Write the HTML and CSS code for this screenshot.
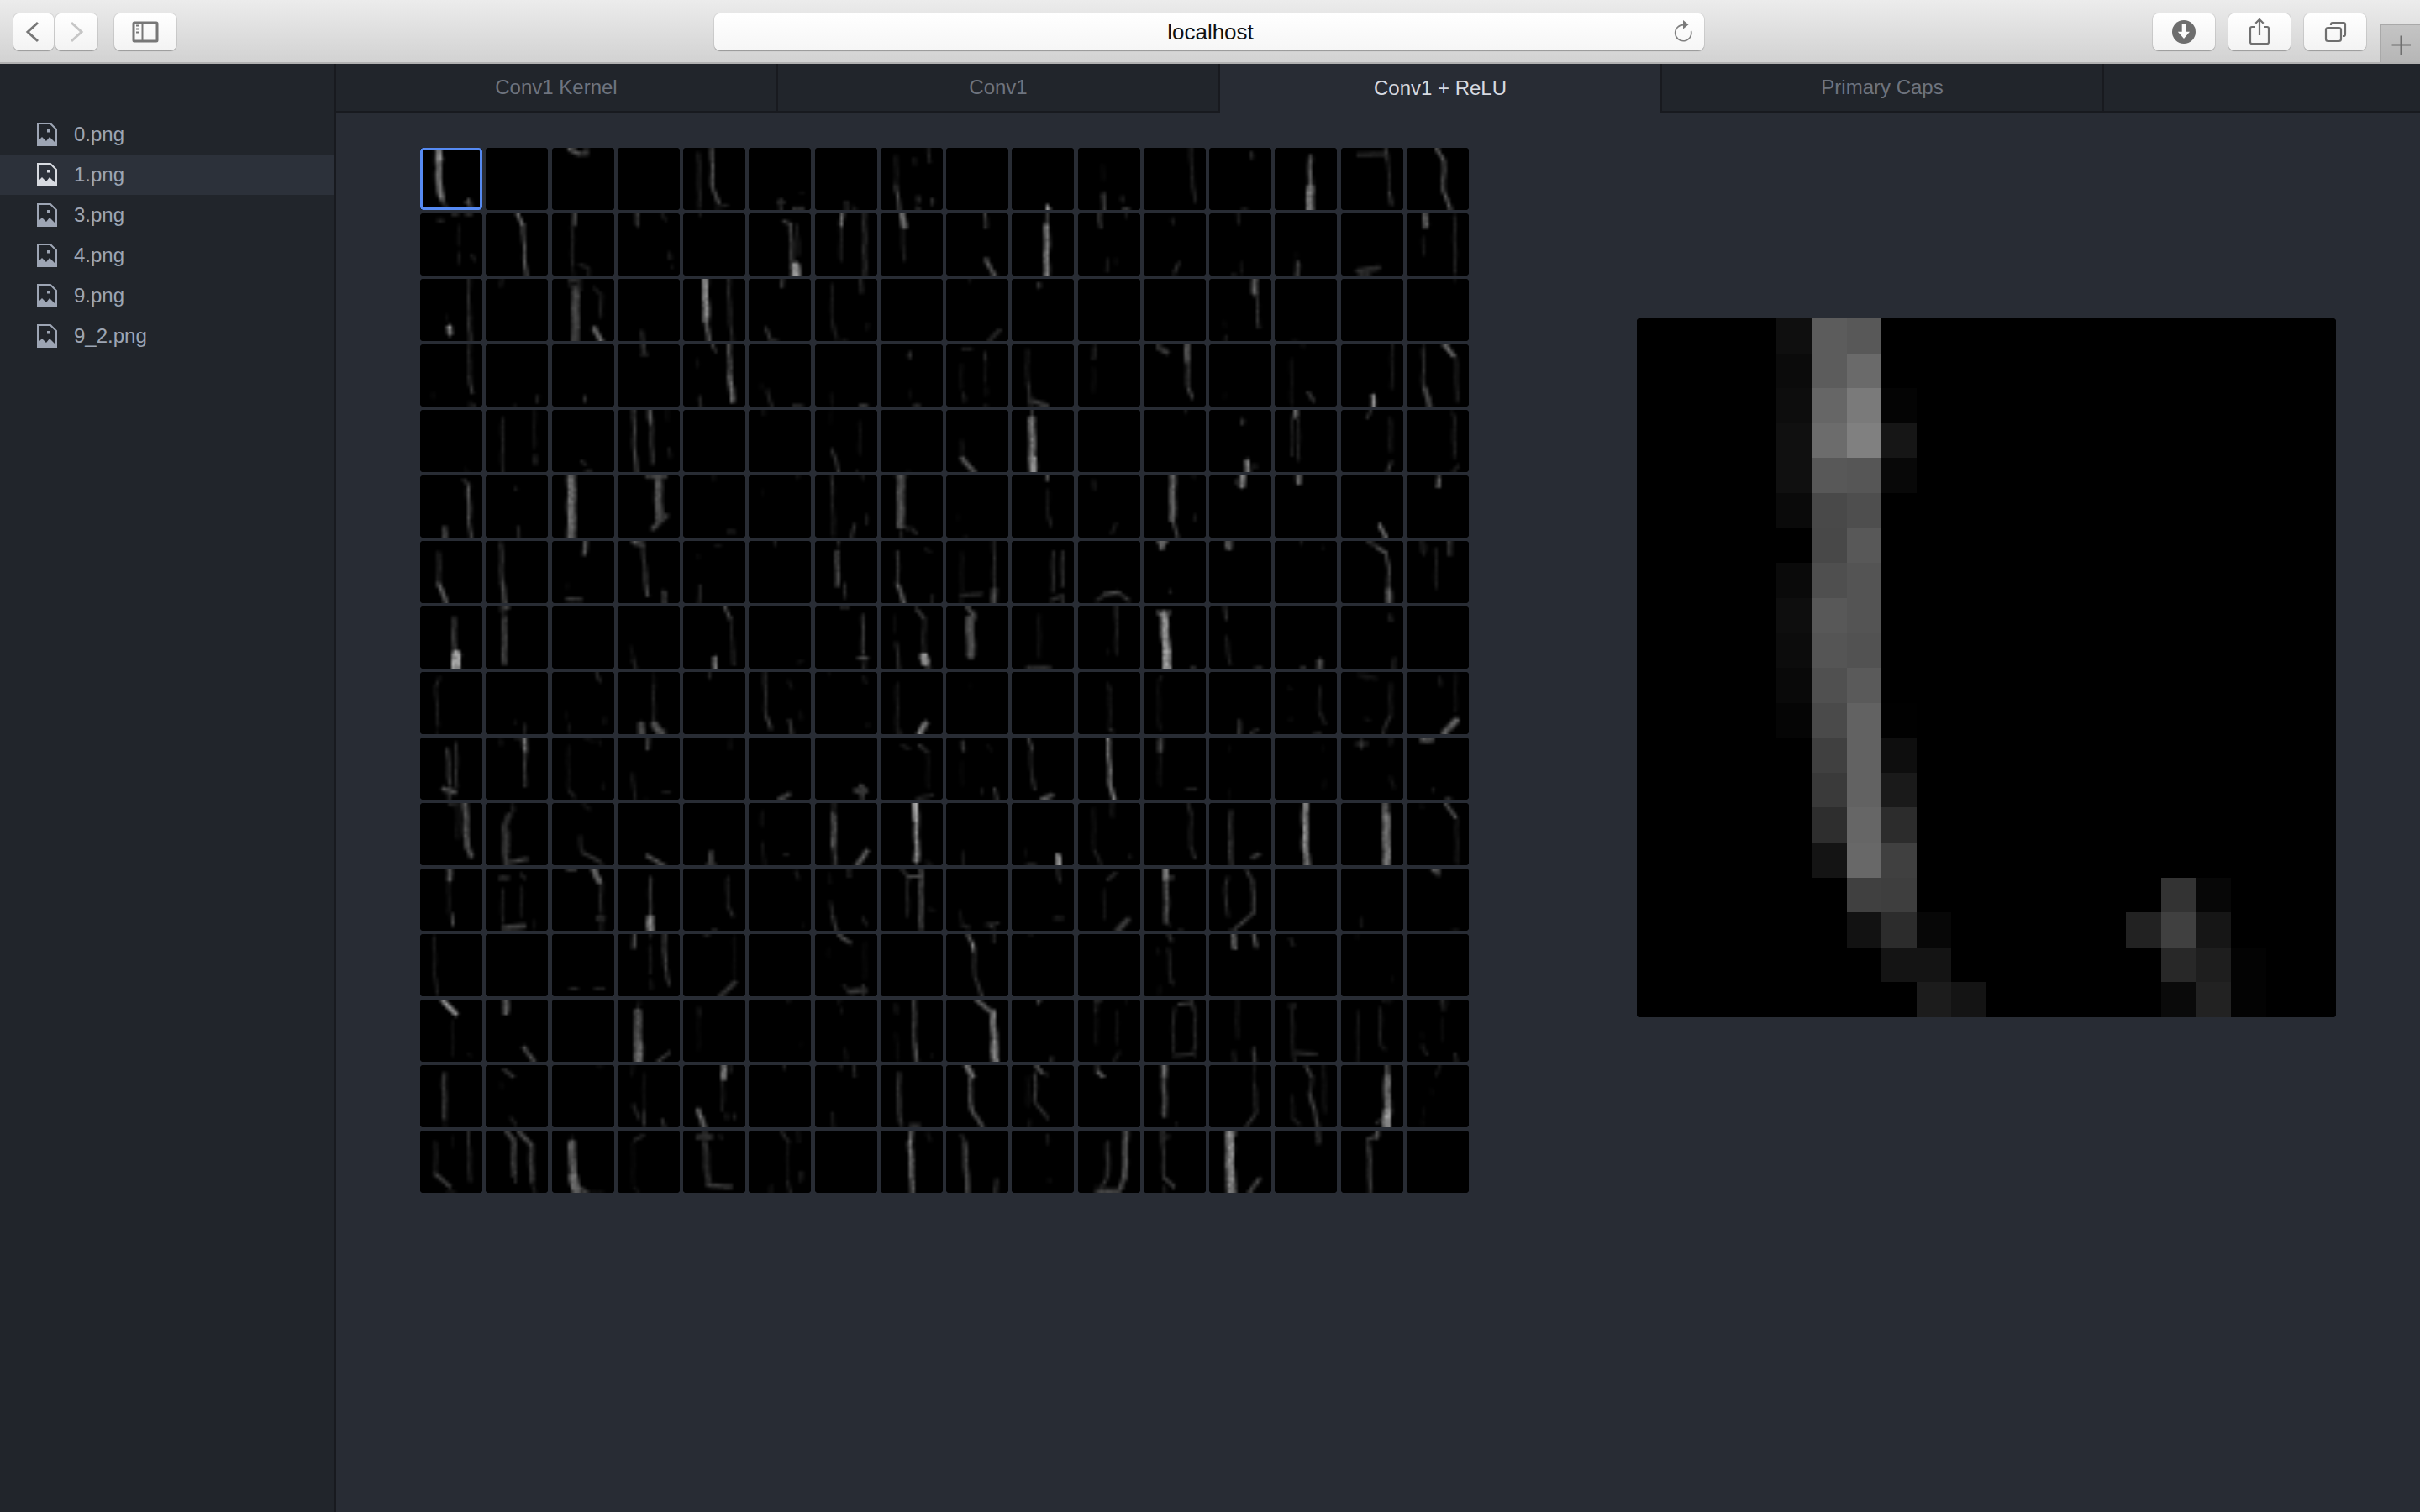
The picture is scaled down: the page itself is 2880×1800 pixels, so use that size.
FILE: index.html
```html
<!DOCTYPE html>
<html lang="en">
<head>
<meta charset="utf-8">
<title>localhost</title>
<link rel="stylesheet" href="styles.css">
</head>
<body>
<svg class="defs" width="0" height="0" aria-hidden="true">
  <symbol id="file-image" viewBox="0 0 24 28">
    <path d="M1 1H16L23 8V27H1Z" fill="none" stroke="currentColor" stroke-width="2"/>
    <path d="M1 27V22L6 17L11 22L15 17L23 25V27Z" fill="currentColor"/>
    <rect x="12" y="8" width="3.5" height="3.5" fill="currentColor"/>
  </symbol>
</svg>

<header class="toolbar">
  <div class="nav-group">
    <button class="tool tool-back" type="button" aria-label="Back">
      <svg width="48" height="44" viewBox="0 0 48 44"><path class="glyph" d="M29 11L17 22L29 33"/></svg>
    </button>
    <button class="tool tool-forward" type="button" aria-label="Forward">
      <svg width="50" height="44" viewBox="0 0 50 44"><path class="glyph glyph-off" d="M19 11L31 22L19 33"/></svg>
    </button>
    <button class="tool tool-wide tool-sidebar" type="button" aria-label="Sidebar">
      <svg width="74" height="44" viewBox="0 0 74 44">
        <rect class="glyph" x="23" y="11" width="28" height="22" rx="1"/>
        <path class="glyph glyph-thin" d="M33.5 11V33M26 14.5H30M26 18.5H30M26 22.5H30"/>
      </svg>
    </button>
  </div>
  <div class="address">
    <span class="address-text">localhost</span>
    <svg class="reload" width="26" height="32" viewBox="0 0 26 32">
      <path d="M13.5 8.6A9.6 9.6 0 1 0 22.6 16" fill="none" stroke="#808080" stroke-width="1.6"/>
      <path d="M13 3L19.5 8.2L13 13.5Z" fill="#7a7a7a"/>
    </svg>
  </div>
  <div class="action-group">
    <button class="tool tool-wide" type="button" aria-label="Downloads">
      <svg width="74" height="44" viewBox="0 0 74 44">
        <circle cx="37" cy="22" r="14" fill="#6e6e6e"/>
        <path d="M34.7 12.7H39.3V21.7H44L37 30L29.8 21.7H34.7Z" fill="#fbfbfb"/>
      </svg>
    </button>
    <button class="tool tool-wide" type="button" aria-label="Share">
      <svg width="74" height="44" viewBox="0 0 74 44">
        <path class="glyph glyph-mid" d="M32 16H28a2 2 0 0 0-2 2V34a2 2 0 0 0 2 2H46a2 2 0 0 0 2-2V18a2 2 0 0 0-2-2H42"/>
        <path class="glyph glyph-mid" d="M37 7V26M32.3 11.7L37 7L41.7 11.7"/>
      </svg>
    </button>
    <button class="tool tool-wide" type="button" aria-label="Tabs">
      <svg width="74" height="44" viewBox="0 0 74 44">
        <rect class="glyph glyph-mid" x="26" y="17" width="18" height="16" rx="2.5"/>
        <path class="glyph glyph-mid" d="M32 14V13a2 2 0 0 1 2-2H47a2 2 0 0 1 2 2V25a2 2 0 0 1-2 2H46"/>
      </svg>
    </button>
    <button class="new-tab" type="button" aria-label="New tab">
      <svg width="46" height="46" viewBox="0 0 46 46"><path d="M12.5 23.5H35M23.5 12.5V35" fill="none" stroke="#6f6f6f" stroke-width="2"/></svg>
    </button>
  </div>
</header>

<div class="workspace">
  <aside class="sidebar">
    <ul class="file-list">
      <li class="file"><svg class="file-icon" width="24" height="28"><use href="#file-image"/></svg><span>0.png</span></li>
      <li class="file file-active"><svg class="file-icon" width="24" height="28"><use href="#file-image"/></svg><span>1.png</span></li>
      <li class="file"><svg class="file-icon" width="24" height="28"><use href="#file-image"/></svg><span>3.png</span></li>
      <li class="file"><svg class="file-icon" width="24" height="28"><use href="#file-image"/></svg><span>4.png</span></li>
      <li class="file"><svg class="file-icon" width="24" height="28"><use href="#file-image"/></svg><span>9.png</span></li>
      <li class="file"><svg class="file-icon" width="24" height="28"><use href="#file-image"/></svg><span>9_2.png</span></li>
    </ul>
  </aside>
  <main class="main">
    <nav class="tabs">
      <div class="tab">Conv1 Kernel</div>
      <div class="tab">Conv1</div>
      <div class="tab tab-active">Conv1 + ReLU</div>
      <div class="tab">Primary Caps</div>
    </nav>
    <section class="panel">
      <div class="grid" id="grid"></div>
      <canvas class="preview" id="preview" width="20" height="20"></canvas>
    </section>
  </main>
</div>
<script src="app.js"></script>
</body>
</html>
```

FILE: styles.css
```css
* { box-sizing: border-box; }
html, body { margin: 0; height: 100%; overflow: hidden; }
body {
  display: flex;
  flex-direction: column;
  height: 1800px;
  background: #282c34;
  font-family: "Liberation Sans", Arial, sans-serif;
}
.defs { position: absolute; }

.toolbar {
  display: grid;
  grid-template-columns: 834px 1178px 1fr;
  height: 76px;
  flex: none;
  padding-left: 16px;
  padding-top: 16px;
  background: linear-gradient(#ececec, #d2d2d2);
  border-bottom: 2px solid #b1b1b1;
}
.nav-group { display: flex; align-items: flex-start; }
.action-group { display: flex; align-items: flex-start; justify-content: flex-end; gap: 16px; }

.tool {
  display: block;
  width: 48px;
  height: 44px;
  padding: 0;
  border: 0;
  border-radius: 7px;
  background: linear-gradient(#ffffff, #f3f3f3);
  box-shadow: 0 0 0 1px rgba(0, 0, 0, .07), 0 1px 1px rgba(0, 0, 0, .22);
}
.tool svg { display: block; }
.tool-forward { width: 50px; margin-left: 2px; }
.tool-wide { width: 74px; }
.tool-sidebar { margin-left: 20px; }

.glyph { fill: none; stroke: #777777; stroke-width: 3; }
.glyph-off { stroke: #c6c6c6; }
.glyph-thin { stroke-width: 2; }
.glyph-mid { stroke: #6f6f6f; stroke-width: 2.2; }

.address {
  position: relative;
  display: flex;
  align-items: center;
  justify-content: center;
  height: 44px;
  padding-left: 3px;
  border-radius: 7px;
  background: linear-gradient(#ffffff, #f6f6f6);
  box-shadow: 0 0 0 1px rgba(0, 0, 0, .06), 0 1px 1px rgba(0, 0, 0, .25);
}
.address-text { font-size: 26px; color: #111111; }
.reload { position: absolute; right: 12px; top: 5px; }

.new-tab {
  width: 48px;
  height: 46px;
  margin-top: 12px;
  padding: 0;
  border: 0;
  border-left: 2px solid #a9a9a9;
  border-top: 2px solid #a9a9a9;
  background: linear-gradient(#c4c4c4, #b6b6b6);
}
.new-tab svg { display: block; }

.workspace { display: flex; flex: 1; min-height: 0; }

.sidebar {
  width: 400px;
  flex: none;
  padding-top: 60px;
  background: #21252b;
  border-right: 2px solid #181a1f;
}
.file-list { margin: 0; padding: 0; list-style: none; }
.file {
  display: flex;
  align-items: center;
  gap: 20px;
  height: 48px;
  padding-left: 44px;
  font-size: 24px;
  color: #9da5b4;
}
.file-icon { flex: none; color: #9da5b4; }
.file-active { background: #2c313a; }
.file-active .file-icon { color: #d7dae0; }

.main { display: flex; flex-direction: column; flex: 1; min-width: 0; }

.tabs {
  display: flex;
  height: 58px;
  flex: none;
  background: #21252b;
  border-bottom: 2px solid #181a1f;
}
.tab {
  display: flex;
  align-items: center;
  justify-content: center;
  width: 526px;
  height: 56px;
  font-size: 24px;
  color: #6e747f;
  border-right: 2px solid #181a1f;
}
.tab-active {
  height: 58px;
  color: #d7dae0;
  background: #282c34;
}

.panel {
  display: flex;
  flex: 1;
  align-items: flex-start;
  justify-content: space-between;
  padding: 42px 100px 0;
}
.grid {
  display: grid;
  grid-template-columns: repeat(16, 74px);
  grid-auto-rows: 74px;
  column-gap: 4.27px;
  row-gap: 4px;
  width: 1248px;
}
.cell {
  position: relative;
  overflow: hidden;
  border-radius: 4px;
  background: #000000;
}
.cell-selected::after {
  content: "";
  position: absolute;
  inset: 0;
  border: 3.5px solid #568af2;
  border-radius: 4px;
}
.cell canvas { display: block; width: 100%; height: 100%; filter: blur(0.6px); }
.preview {
  display: block;
  flex: none;
  width: 832px;
  height: 832px;
  margin-top: 203px;
  border-radius: 4px;
  image-rendering: pixelated;
  background: #000000;
}
```

FILE: app.js
```js
// First feature map (20x20 activations), also shown enlarged in the preview: "column:hex" per row.
var FIRST = [
  "4:0f 5:5c 6:58",
  "4:0b 5:5c 6:6a",
  "4:0d 5:66 6:7a 7:04",
  "4:10 5:6c 6:80 7:16",
  "4:10 5:58 6:56 7:08",
  "4:0a 5:49 6:4e",
  "5:48 6:58",
  "4:0a 5:4f 6:54",
  "4:0e 5:58 6:54",
  "4:0c 5:55 6:52",
  "4:09 5:50 6:5a",
  "4:05 5:4a 6:62 7:01",
  "5:40 6:62 7:0e",
  "5:3a 6:62 7:1a",
  "5:2e 6:66 7:2c",
  "5:14 6:68 7:40",
  "6:40 7:3e 15:33 16:07",
  "6:12 7:2c 8:07 14:22 15:40 16:16",
  "7:14 8:14 15:28 16:1e 17:03",
  "8:1c 9:14 15:0a 16:22 17:03"
];

// Every other map: strokes "x1,y1,x2,y2,brightness[,width]" in the 20x20 activation space.
var MAPS = [
/* row 1 */
"@first",
"",
"5.5,0.5,8,1.5,130,1.2 8,2,11,1.8,100 11,0,11,2,70",
"",
"9.2,0,9.4,13,120 9.4,13,11.3,17.5,110 5,2,5.2,19,45 11,19,14,18.5,40",
"10.3,16.5,10.3,19.5,60 9.5,17.5,11.5,17.5,50 14.5,19.4,17.5,19.4,60 17,14.5,17,14.5,25",
"10,17.5,10,20,60 12,19,13,20,30",
"5,3,5,12,35 5,12,6,20,90 15.3,0.5,15.8,4.5,50 12,16,12,17,80 11.8,19.2,12.2,19.8,70 16.5,16.5,16.5,18,70 11,3.5,11,5,35",
"",
"11.7,19.3,11.7,19.6,255 11.5,18.5,11.5,18.5,120",
"8.2,15,8.2,20,95 14.2,16,14.2,17,50 14.5,19.5,16,19.5,60 8,6,8,10,15",
"15.2,0,15.5,9,45 15.5,9,16.5,17,50",
"13.7,1.8,13.7,3,70 11,19.5,12,19.5,30",
"11.4,3,11.4,12,110,1.4 11.4,13,11.2,20,150,2.6",
"5.5,2.2,14,2,70 14.2,0,15,4,80 15.2,4,15.6,14,40 15.6,14,16,18,70",
"9.5,0,12,4,130 12,4,11.8,14,120 11.8,14,14.2,19.8,120",
/* row 2 */
"6,2.2,7,2.2,60 10.8,0.4,12,0.4,50 15,0.4,16.5,0.4,50 12.4,4,12.4,10,22 12.4,13,12.4,16,30 16.5,13.5,17.5,15,35",
"10,0,12,4,160 12,4,12.5,14,100 12.5,14,13,20,110",
"7.2,0,7.2,3.5,90,1.4 6.5,4,6.5,17,40 9,16.5,11.5,17.5,45 11.7,18,11.7,20,40 6.5,18,7,20,25",
"6.3,0,6.3,3.8,90 14.5,0.5,15.5,2,40 16.7,13,16.7,14.5,45 17.5,17,17.5,17.5,25",
"5.5,0.4,5.5,0.8,25",
"11.3,2.5,13.5,3.5,80 13.5,3.5,14,17,80,1.2 15.5,4,16,13,40 15,17,15,20,190,3",
"8.7,0,8.5,4,130,1.2 8.3,5,8.3,15,40 15.9,0,16,20,70",
"7,0,7.5,4,150,2 7,5,7.5,15,40",
"12.5,0,12.7,4.3,80 13,15,15.5,20,110,1.4",
"11.3,0,11.3,4,70 11.3,4,11.2,20,150,1.8",
"6.9,0.3,7.2,4.2,80 9.3,15,9.3,18.5,35 12,15,12,16,20 15.5,0,15.5,1,30",
"9.3,2,9.3,3,45 11.3,16,10,19,60",
"9.3,0.3,9.3,3,45 10.4,16,10.4,19,25 7.5,19.5,8,19.5,25",
"7.4,16,7.2,20,80,1.4 7,13,7,14,15",
"5.5,18.5,12,17.5,60,1.6 6,19.5,9,19.5,50",
"6,1,6,4,110,2 5.4,8,5.4,13,30 15.4,1,15.6,19,45",
/* row 3 */
"15.6,0,15.6,12,50 15.8,12,16,20,70 9.5,15.5,9.5,17.5,190,1.6 8.5,12,8.5,13,15",
"5,0.3,5,2,35",
"6,0.5,9,1,70 6,2,9,3,60 7.5,4,7.5,19.5,90,2.6 13.5,3,15.5,5,40 15.7,5,15.7,12,40 13.5,16,16,20,130,1.6",
"7.9,17,8,20,60",
"7,0,7.4,13,170,2 7.4,13,8.2,20,110,1.4 14.6,0,15,12,55 15,12,15.7,20,45",
"10.8,0,10.8,2.5,80 5.5,16,7,19.5,70 7,19.5,9,19.5,40",
"14.8,0,14.8,4,60 5.4,2,5.4,14,30 5.4,14,7,19,40 16.8,14.5,16.8,16,25 9,19.5,10,19.5,20",
"",
"7.5,0.2,7.5,0.8,25 17,16.5,14,19.5,50,1.4",
"8.9,1.7,8.9,2.7,90",
"",
"",
"14.5,0,14.7,4.5,130,1.8 15.3,5,15.8,15.5,60 5,14,5,15,15 5.3,18.5,5.3,19.5,35",
"6,19.5,7,19.5,12",
"",
"15.3,0.3,15.3,0.8,20",
/* row 4 */
"15.8,0,15.8,10,50 15.8,10,16.6,15.5,70 16,19,17.5,19.5,35 4,16,4,17,15",
"16.7,16.5,16.7,18.5,40 9.4,19.4,9.4,19.7,25",
"10.6,17,10.6,18,70",
"8,0,8.4,3,90 9.5,3.2,8,3.2,50",
"9.5,0.5,10.5,2,80 14.8,0,15,10,110,1.2 15,10,15.8,18,130,1.6 4.5,5,4.5,7,20 5.2,17,5.8,20,50",
"6,15,7.5,20,45 14.5,19.5,17,19.5,40 4,13,4,14,15",
"14.5,19.5,16.5,19.5,60 5.3,16,5.3,19,20",
"9.4,3,9.4,4,90 11,19.4,12.2,19.4,60 9.4,15,9.4,17,15",
"5.5,1.4,8,1.4,45 12.5,3,12.5,5,55 12.6,5,12.6,12,22 4.8,6.5,4.8,14,22 5.5,16,6,18,45 12.8,14,12.8,16,22 12.5,19.5,13,19.5,25",
"5,2,5,12,35 5,12,6,17.5,60 6,18,11,19.5,80,1.4 6,19.5,6,20,60",
"5.1,1,5.1,4.5,55 5,8,5,15,18",
"4.8,1,7.5,2.5,70,1.8 14,0,14,5,130,1.6 14,5,14.3,14,80 14.3,14,15.5,17,90",
"5,16,5,17,12",
"5.4,5,5.4,19,22 11,15.5,12.5,18,80 9,0.4,9,0.8,20",
"10.3,16.5,10.4,20,190,1.3 16.4,0.5,16.4,14,30",
"5.4,1,5.4,14,60 5.6,14,7.6,20,100,1.6 12.2,0,15,3.5,140,1.4 15.8,4,16.2,18,45",
/* row 5 */
"14.5,19,15,19.5,15",
"5.4,3,5.4,19.5,40 15.6,0.5,15.6,12,25 16,15,16,17,60",
"9.5,16.5,10.5,17.5,50 11,19.4,12.5,19.4,35",
"5.2,0.5,5.4,14,80 5.4,14,6.3,20,100 10.4,0,10.6,4,120,1.4 10.7,4,11.2,17,70 16.5,12.5,16.8,15,30 16,0.5,16,3,20",
"",
"4.7,0.5,4.7,1.5,25",
"5.5,13,7.5,19.5,70 14.4,4,14.4,14,22 5,1,5,4,10 13.5,19.5,13.5,20,30",
"9,19.5,9,20,15",
"5,10,5,15,30 5.2,15.5,9,20,100,1.6",
"6.4,0,6.4,3,60 6.4,3,6.8,20,150,2.2 6.8,15.5,6.8,19,190,2.6",
"",
"13.7,0.2,13.7,0.8,30",
"10.7,3.2,10.7,4.2,80 12.3,16.5,12.3,19.5,170,1.6 14,18,15,18,50",
"6.7,0.2,6.7,2,130,1.6 5.6,2,5.6,14.5,40 7.6,2,7.6,16,40",
"9.5,0.5,8.5,2.5,60 15.9,3,15.9,13,35 16,17,15,20,70",
"14.5,1,15.3,2,30 15.3,2,15.3,15,45 16.5,18,15,20,45",
/* row 6 */
"14,1.5,15.5,3,70 15.5,3,15.7,14,100,1.2 15.7,14,16.3,20,90 7.8,17,7.8,19.5,80,1.8",
"9.8,4,9.8,4.5,35 10.3,16.5,10.6,19.5,50",
"6.2,0,6.2,20,130,2.8",
"9.5,0.5,15.5,0.5,70,1.2 13,0,13.3,14,100,2.6 15.5,13,11.5,17,80,1.6",
"9.7,0.6,9.7,1.2,25 14.5,18,16.5,18,45",
"15.5,0.3,15.9,0.8,25 4.5,5,4.5,6,10",
"5.5,0.5,5.5,6,50 5.5,6,6,19,35 12.7,16,11.7,20,70 16.5,13,16.5,15.5,40 15.4,0.5,15.4,1,35",
"5.5,0.5,7.5,0.5,80,1.4 6.4,0,6.4,16,100,2.6 7,16,8.5,17,60 10,17,11.3,18.5,60 6.5,18,6.5,20,40",
"4,13,4,14,10 6,19.5,6.5,19.5,15",
"11.5,0.3,11.5,1.3,130 11.5,5,11.7,14,30 12.3,14,12.3,16,40",
"5,2,5,4,45 12.2,15.5,11,18.5,35",
"9.3,0.6,9.3,14,130,2 9.5,14,10.8,20,90 16.5,13,16.5,14.5,35 16,0.5,16,0.8,25",
"10.7,0.5,10.7,3.2,160,2 9,2,11,2,90",
"7.8,0.3,7.8,2.2,130,1.8",
"12.5,16,14.5,20,150,1.2",
"10.2,1,10.2,3.5,150,1.2",
/* row 7 */
"6,4,6,14,60 6,14,8.5,20,120,1.4",
"5,1,5.2,13,70 5.2,13,6.3,20,90,1.4",
"10.7,0,10.3,4,110,1.4 5,18.7,9,18.7,60,1.4 5,14,5,15,15",
"5,0.6,8,1.2,110,1.2 8,1.2,8.8,10,70 8.8,10,9.5,17.5,90 14.9,16.5,14.9,19.5,70,1.6",
"5.3,14.5,5.3,20,50 10.5,1.5,12,1.5,25 4.8,4.5,4.8,5.5,15",
"8.5,0.2,8.5,1,40",
"7.5,0.3,7.5,1,60 7,3.5,7.3,14,90,1.5 9.6,14,9.6,18,55",
"5.5,3.5,5.5,14,60 5.5,14,7.5,20,110,1.4 14.5,2.5,16,3.5,30 16.5,17.5,16.5,20,35",
"15.4,0.5,15.4,15,50 15.4,15.5,15.4,19.5,90,1.8 5,4,5,17,22 5,17.5,11,17,55,1.2 5,18,5,20,30",
"13.3,3.5,13.3,16,55 16.3,3.5,16.3,14.5,60 13,19,16.5,17.5,55,1.2 16.3,18,16.3,20,55",
"6,19,9,17,60 9,17,13,16.5,90,1.3 13,16.5,16,19,70",
"5,0.2,7,0.2,130,1.4 5.9,0.2,5.9,2,120,2 8.5,16,8.5,16.5,40",
"6.3,0.2,6.3,1.8,110,2.4",
"8.6,0.3,8.6,0.8,30 15.5,2,15.5,2.5,20",
"8.7,0.3,11,1.5,70 11.5,2,14,3.5,120 14.5,3.5,15.3,9,90 15.3,9,15.3,16,80 15.3,16,15.3,20,120,2",
"5,0.5,5.4,4,50 6.5,2,6.2,3,25 9.4,2.5,9.4,15,35 13.8,0,13.8,4,70,1.4",
/* row 8 */
"10.9,4,10.9,15,80,1.3 11.6,15.5,11.6,20,200,3.2",
"5,1,7,0.5,90 5.8,1.5,5.8,3.5,50 6,4,6,18,85,1.6",
"",
"4.2,13,5,17,20 5,17,6,20,50",
"13.5,0.3,15,4,100 15.5,4.5,15.8,14,35 16,14,16.3,18.5,50 10.3,16.5,10.3,19.5,170,1.4",
"16,18,17,17.5,25",
"15.4,3,15.4,15,70 14,16.5,16.5,16.5,90,1.2 15.8,17,15.8,20,50 8.5,0.4,10.5,0.4,40",
"11.8,1,14,4,90 14,4,13.8,15,50 13.8,16,14.5,18,200,2.6 15.5,18,15.8,20,70 4.5,3,4.5,8,15 5,12,6,20,55",
"7,0.5,9,3,90,1.4 8.8,2,9,4,90 7.5,4,8,15.5,100,2.8",
"8.8,3,8.8,16,25 5,19.5,12,19.5,50,1.2",
"12.2,0.3,12.4,4,60 12.3,4,12.3,15,40 9.5,14,9.5,15,15",
"4.8,2,8,2,100,1.5 6.5,2.5,7.3,14,180,2.6 7.3,14,7.5,20,200,2.8 15.5,19.5,16.5,19.5,45",
"5,0.5,5.4,4,60 5.4,10,6.7,18.5,40 15,19.5,16.5,19.5,45",
"14.4,17.5,14.4,20,110,1.8 8.5,19.5,9.5,19.5,45",
"15.9,3,15.9,4.5,60 17,17,17,20,50",
"",
/* row 9 */
"6,2,5,5,40 5,5,5.8,17,35 5.3,19,5.3,20,20",
"9.3,16,9.3,16.5,25 12.5,17,12.5,19.5,40",
"14.5,0.3,15.3,2.8,60 5.5,17,5.5,19,25 16.8,15,16.8,16.5,25 4.5,13,4.5,15,12",
"11.6,1,11.6,4,22 11.6,4.5,11.6,16,40 7.7,17,7.7,19.5,90,2.4 12,17,13.8,19.5,100,2.6 15,19,15,20,60",
"8.3,0.2,8.3,1.8,45",
"5.2,0.5,5.5,14,55 5.5,14,7,18,80 13,15.5,14,20,70 13,3,13.8,5,25 16.8,13,16.8,15,20",
"15.8,1.5,16.2,3.5,30 17,16.5,17,17.5,20 4.5,0.4,4.5,0.8,15",
"5.3,4,5.3,19.5,35 14.5,16.5,12.5,19.5,160,1.8 6.5,19,6.5,20,25",
"8,4,8,5,8",
"",
"9.5,4,10.2,6,40 10.2,6,10.2,18,30 10.2,18,11,19,50",
"5.5,1.5,4.8,3,30 4.8,3,4.8,17,18 5.2,17,5.2,18,30",
"9.6,16,9.6,19.5,70,1.3 13.5,19.5,15.5,18.5,50",
"14.4,5,14.4,13,30 14.4,13,16,16.5,45 4.5,5,5,5.5,20 13,19.5,14.5,19.5,35 5,15,5,15.5,20",
"15.9,4,15.9,14,35 15.9,14,14,18,60 14,18,13.5,20,50 6,1,11,2,30 8,1,8,2,30 8,15,9,15.5,25",
"15.7,1,15.7,12.5,25 10.5,2,11,4,40 16,15.5,12,19.5,120,2",
/* row 10 */
"8.8,4,9.5,15,70,1.2 11.6,2,11.6,16,55 7.5,16.5,11,17.5,100,1.6 9,17.5,9.5,20,70",
"12.6,0,12.6,4,140,1.5 12.6,4,12.6,15.5,70 5,1,5,2,30 10,0.4,10.5,0.4,30",
"5.2,3,5.2,16,20 5.5,17,7,19,45 11,0.5,13,1,20 15,1,15.5,2,20 16.5,15,16.5,16.5,20",
"9.7,0,9.7,3.5,80,1.2 4.8,12,5.5,19.5,35 14.7,17.5,16.5,17.5,35 9,19.5,9,20,10",
"15.2,1,15.2,3.5,22",
"10,19.8,13,18.2,90,1.3",
"13.2,17,16.5,17,100,1.4 15,15.5,15,19,90,1.4",
"7,2.5,9,3.5,40 12.5,2.5,15,4.5,65 15.2,5,15.2,16,20 12,19.5,16.5,18.5,50",
"5.5,1.5,5.5,4,70,1.3 13.5,2.5,14.5,4,20 15.5,16.5,16.5,20,70 11.5,16.5,11.5,18,30 5,8,5,15,12",
"5.5,0.3,6.5,4,80 6,4,6.5,13,45 6.5,13,7.5,16.5,60 9.5,20,13,18.5,110,1.4",
"9.5,0,10,8,150,1.3 10,8,10.3,15,140,1.3 10.3,15,11.5,20,150,1.3",
"5.4,1,5.4,4,90,1.8 5.2,5,5.2,15,25 14,16.5,16.5,16.5,45",
"6.5,3,6.5,4,12 6.5,17,6.5,19,12",
"15.5,3,15.5,4,10 16,14,16,16,15",
"5,2,8,2,70 6.5,1,6.5,3,70 15.9,0.5,15.9,2,40 16,13,17,16,30",
"5,0.8,8,0.8,110,1.6 8.5,16.5,8.5,17,30 13,19.5,14,19.5,50",
/* row 11 */
"9.5,0.5,13.5,1,40 12,1,12,11,30 14.5,0.5,15,14,100,2 15,14,16.5,17,100,1.6",
"8.7,1,8.7,2.5,50 7.5,4,6,8,60,2 6,8,6.5,20,70,1.8 7.5,9,7.5,16,40 7.5,19,13,18,80,1.2",
"10,0.5,12,2,25 9,11,9.5,16,45 10,16,15.5,19,70 15.5,19,16,20,50",
"9.5,17,15,20,100,1.2",
"9,16,9,20,100,1.4 8,19.5,10,19.5,70",
"4.3,3,4.3,7,25 4.5,13,5,20,25 11.8,16.5,12.5,16.5,40",
"6,0.5,6,4,60 6,4,6,14,110,1.6 6,14,6.5,20,70,1.4 16.5,15.5,13.5,20,120,1.6",
"11.2,0,11.2,5,210,2 11.4,5,11.6,15,170,1.5 11.6,15,11.6,18.5,170,1.8 15,19,16,19.5,35",
"5.5,16,5.5,20,30",
"14.8,17,15,19.5,200,1.8 5,19.5,7.5,19.5,35 4.5,15,4.5,17,15",
"5,2,5,15,25 5,15,7.3,19.5,40 11,0,11,4,35 16.6,17,16.6,17.5,35",
"14.5,0.5,15.3,4,50 15.3,4,15,14,40 15,14,16.5,17.5,55",
"6.8,3,6.8,12,55,1.3 6.8,12,7,20,70,1.3 14,17.5,16,16.5,70,1.4",
"9.8,0,9.8,14,170,2 9.8,14,10.4,20,140,2.2",
"14.3,1,14.3,4,110,2.4 14.5,4,14.7,20,150,2.6",
"12.5,0,15.5,4.5,120 16,4.5,16.2,19,35 5,1,5,1.5,20",
/* row 12 */
"9.4,0.3,9.4,3.5,120,1.6 9.2,4,9.2,14,30 10.5,15,10.5,18,90",
"5,3,7,3,60,1.4 11.5,2,12.5,3,50 5.4,7,5.4,17,35 11.5,6,11.5,15,30 6,19,12,18.5,80,1.8 15.5,17,15.5,19,20",
"13.5,0,15,4,130,2 15.7,4.5,15.7,14,50 14.5,16,16.5,16,70,1.3 16,17,16,20,40 5,0.5,7.5,0.5,60",
"10.5,3,10.5,16,70 10.5,16,10.5,20,170,2.4",
"14.3,3,14.3,12,40 14.3,12,16,15,50 9.5,19.5,10.5,19.5,35",
"15.2,1,16,3,40 17.5,18,17.5,18.7,15",
"5,11,5.5,15,45 5.5,15,7,20,70 11,0.3,11,2.5,55 15.5,16,16.5,18,40 4.7,2,4.7,4.5,20",
"7,0.5,9,3,70 8.6,3,8.6,15,45 9,2.5,13,2.5,90 13,0,13,19,90,1.4 15.5,13,17,13.5,25",
"5,18,7,19,50 15,19,14,18,60 13,18,16.5,17.5,50 4.5,14,5,18,25",
"14.9,0.3,15.5,4,60 14,16,16,16,55",
"9.5,3.5,12,1.5,55 8.4,7,8.4,16,25 12.5,20,16,16.5,75,1.8",
"7,0.5,7,3,170,1.8 8,3,9,3,100 7.3,3,7.3,17,100,1.6 7,17,8,18,45 11.5,19.5,12,19.5,30",
"12,0.5,14,4,70 14,4,14.5,14,70,1.2 14.5,14,8,19.5,80 6,3,5,7,50 5,7,6,15,50 7,19.5,7,20,40",
"",
"6.5,16,6.5,18.5,25",
"8.5,0.5,10,1,110,1.5 10,1,10,2,80 15,19.5,16,19.5,20",
/* row 13 */
"4.5,1,4.7,14,35 4.8,14,5.5,19,40",
"",
"6,17.5,8,17.5,45 14,17.5,16.5,17.5,45",
"5.3,0.3,5.3,4,100,1.2 10.5,0,10.5,1,40 10.5,4,10.5,12.5,30 10.8,15,10.8,17.5,30 15,0,15.3,10,70,1.3 15.3,10,16.5,16,70",
"16.4,1,16.4,14,15 7,0.5,8,0.5,35 16.5,15.5,12,20,70,1.5",
"",
"7.5,0.3,11,2.7,110,1.1 16,3,16,14,15 9.4,16.5,11,18.5,45 11,18.5,16,18,70,1.6 15.5,16.5,15.5,20,50 4.3,5,4.3,7,12",
"",
"7,0.3,8.5,3,120,1 8.5,3,8.7,5,170,1.2 8.9,5,9.2,14,60 9.2,14,11.5,19.5,70 15.4,0.3,15.4,2.5,45",
"6,0.3,6.5,0.3,20",
"",
"8,0.5,9,2,70 4.7,5,4.7,6,22 8,5,8.7,15.5,40 9.5,15,9.5,16,30 5,17,5,19,15",
"8,0,8,4.4,170,1.2 14.5,0,15,3.8,110,1.2",
"5,1.5,5.7,3.5,45",
"5,0.5,5,1,15 16.5,14,16.5,15,12",
"",
/* row 14 */
"7.5,0.5,11.3,4.5,190,1.6 10.5,7,10.5,18,18 15.5,17.5,16.5,18,15",
"6.4,0,6.4,4,120,2 12.5,15.5,15.5,20,90,1.4",
"",
"7,1,6.3,3.5,35 6.5,4,6.6,14,100,2.6 6.6,14,6.8,20,130,3 16.5,17,13,20,70",
"5,3,5,5,40 5,6,5,16,12",
"12.8,0.3,12.8,0.8,30 17,14,17,15,8",
"7.7,0.2,7.7,1,30 8.6,3,8.6,4,25 9.5,16,10,19,25",
"10.8,0,10.8,14,90,1.1 10.9,14,11.7,20,100,1.3 5,2,5,4,35 5,11,5.5,19,15 16.5,17.5,16.5,18.5,15",
"10,0.3,14.5,4,110,1.5 15,4,15.5,14,140,2 15.5,14,15.7,20,160,2.4",
"8.6,0.2,8.6,0.9,130 12.7,18.9,12.7,19.4,70",
"5.5,0.5,7,0.5,50 6,1,5.8,4,45 5.8,6,5.8,14,22 12.5,4,12.5,14,22 13,17,11.5,20,35 15.5,0.5,15.5,1,15",
"11.5,1.5,15.5,1,80 15.5,0.5,16,3,70 10,3,9.5,5,45 9.5,5,9.5,17,40 16.5,3,16.5,16,45 10,18,16,17.5,50 16,16,16.5,18,40",
"9,0,9,12,30 8,17,8,20,45 14.5,16,14.5,20,70,1.2",
"5,2,6.5,2,60 5.6,3,5.8,17,40 5.8,17,13,17.5,60,1.1 5.8,18,6.5,20,40",
"5.4,4,5.4,19.5,25 12.6,3,12.6,14.5,40 13,15,14,16,30 13.5,0.5,16,0.8,25",
"11.8,0.5,11.8,3,60 11,1,13,1,30 11.5,6,11.5,13,15 5,15,6.5,17.5,40 15.7,17.5,16,20,50 5,11,5,12,15",
/* row 15 */
"7.6,3,7.8,17,70,1.4 7.8,17,7.8,19.5,25",
"6,1.5,9,3.7,70 8,17,9.5,19,40 5,6,5,7,15",
"15,0.3,16,0.8,15",
"5,0.5,4.5,3,20 8.5,3,8.5,14,20 5,13,7,17,50 8.5,15,8.5,19,70 14.5,17.5,15,20,60",
"13,0,13,4,140,2 15,0,15,2,50 12.8,4,12.6,14.5,35 5,14.5,6.5,19.5,130,1.6 14,16,14,17,45 16.4,16,16.4,17,45",
"11.4,0.3,11.4,1,50",
"8.3,0.3,8.3,1,40 12.7,0,12.7,3.5,50 5.5,15.5,6,19.5,30",
"5.3,3,6,3,50 5.8,3,5.8,13,60,1.4 5.8,13,6.5,19,60,1.4 9.8,19.2,12.2,19.2,70",
"6.5,0.5,8.5,3.5,140,1.8 7.8,3,7.6,11,90,1.3 7.6,11,8.5,15,110,1.3 8.5,15,11.5,19.5,100,1.3",
"8,0.5,10,2.5,110,1.2 10,2.5,11.5,3,40 7.5,3,7.5,12,70,1.1 7.5,12,11.5,17,60 5.2,4,5.2,13,20 5.8,18,5.8,20,25",
"6.2,0.2,6.2,2,70 6.2,2,7.8,3.6,140,1.1",
"6.5,0,6.5,3.5,140,1.8 6.5,3.5,6.7,16,90,1.6 10.5,18.7,10.5,19.2,25",
"14.5,0,14.5,6,25 14.5,6,15.2,15,55 15.2,15,12,19.5,60",
"10,0,12,4,90,1 12,4,11.3,9,50 11.3,9,14,20,80,1.2 15.8,0,16,15,30 5.7,10,5.7,17,30 5.7,17,8,19,35",
"14.8,0,14.8,4,100,1.5 14.8,4,14.9,14,130,2.4 14.9,15,14.7,19.5,190,2.8 11.5,18.5,13,17.5,50",
"10.5,0.5,9.5,3,30 5.5,14,5.5,16,12 5,18,5,19,12 8,8,8,9,10",
/* row 16 */
"5,4,5,14,40 5,14,9.5,18,90,1.2 15.5,0,16,16,50 10.5,2,10.5,5,15 9,19.5,11,19.5,20",
"7,0.5,9,3,80,1.6 9,3,9,14,70,1.8 11,0.5,14.5,4.5,90,1.6 14.5,4.5,14.8,16,70,1.6 9.5,15.5,9.5,16.5,50 15,17,16,20,35",
"6.2,2,6.2,4,30 6.2,4,6.8,15,110,2.6 6.8,15,8,20,130,3.2 9,18.5,11,20,80,1.5 11,19.8,16,19.8,20",
"5.5,3,8,1.5,55 5,4,5,17,15 5,18,6.5,19.5,20",
"5,2,9,2,80,1.4 7,0,7,3,80 7,4,8,17,50,2 8,17.5,15,18,70,1.5 12,1.8,12.5,2.2,40",
"10.7,0.2,12.8,3.8,50 12.5,4,12.5,16,20 12.5,16,13.5,20,40 16,0.2,16,3.5,25 16.8,13.5,16.8,16,45 7.3,18,7,20,30",
"",
"9.7,0,9.7,4,150,1.2 9.5,4,10,15,140,1.5 10,15,10.2,20,120,1.5 15,1,16,3,30",
"5,1.5,6.5,4,50 6,4,6.5,14,80,1.6 6.5,14,7,20,80,1.6 16,16,16,20,70",
"11.5,1.5,11.5,4,30 12,16,12.5,16,20",
"15.3,0,15,15,100,1.8 15,15,13.5,18.5,90,1.6 9.5,4,9.5,15,55,1.4 9.5,15,7,19,60 6,19.3,13,19.3,80,1.4 6,18,6,19,30",
"6,0,6.2,4,70,1.2 6,2,8,2,50 6.2,4,6.5,15,60 6.5,15,9.5,18,80,1.2 6.5,18,6.8,20,40",
"6,0.5,8,1,130,1.4 6.6,1,6.8,15,170,2.8 6.8,15,7.3,20,160,3 16,15.5,13,20,80,1.4",
"13.9,0.2,13.9,3.8,70,1.2",
"8.5,3,11.5,1.5,80,1.2 11.5,0.3,11.5,2,110,1.3 8.5,3,8.5,5,50 9,5,9.3,14,75,1.3 9.3,14,9.3,20,70,1.3",
""
];

function firstPixels(gain) {
  var out = new Array(400).fill(0);
  FIRST.forEach(function (row, y) {
    row.split(" ").forEach(function (entry) {
      var p = entry.split(":");
      out[y * 20 + Number(p[0])] = Math.min(255, parseInt(p[1], 16) * gain);
    });
  });
  return out;
}

function segDist(px, py, a) {
  var dx = a[2] - a[0], dy = a[3] - a[1];
  var len = dx * dx + dy * dy;
  var t = len ? ((px - a[0]) * dx + (py - a[1]) * dy) / len : 0;
  t = Math.max(0, Math.min(1, t));
  return Math.hypot(px - a[0] - t * dx, py - a[1] - t * dy);
}

// Deterministic grain, so strokes read as activations rather than ruled lines.
function grain(i, x, y) {
  var n = Math.sin(i * 12.9898 + x * 78.233 + y * 37.719) * 43758.5453;
  return n - Math.floor(n);
}

function strokePixels(spec, index) {
  var strokes = spec ? spec.split(" ").map(function (s) { return s.split(",").map(Number); }) : [];
  var out = [];
  for (var y = 0; y < 20; y++) {
    for (var x = 0; x < 20; x++) {
      var v = 0;
      var wobble = 0.12 * Math.sin(y * 0.7 + index * 1.7);
      strokes.forEach(function (s) {
        var w = s[5] || 1;
        var d = segDist(x + 0.5 + wobble, y + 0.5, s);
        var c = Math.max(0, Math.min(1, w * 0.45 + 0.55 - d));
        var peak = s[4] >= 250 ? s[4] : s[4] * 0.8;
        v = Math.max(v, peak * c);
      });
      if (v < 250) v *= 0.82 + 0.3 * grain(index, x, y);
      out.push(Math.min(255, v));
    }
  }
  return out;
}

function paint(canvas, pixels) {
  canvas.width = 20;
  canvas.height = 20;
  var ctx = canvas.getContext("2d");
  var img = ctx.createImageData(20, 20);
  pixels.forEach(function (v, i) {
    img.data[i * 4] = img.data[i * 4 + 1] = img.data[i * 4 + 2] = v;
    img.data[i * 4 + 3] = 255;
  });
  ctx.putImageData(img, 0, 0);
}

var grid = document.getElementById("grid");
MAPS.forEach(function (spec, i) {
  var cell = document.createElement("div");
  cell.className = i === 0 ? "cell cell-selected" : "cell";
  var canvas = document.createElement("canvas");
  paint(canvas, spec === "@first" ? firstPixels(1.2) : strokePixels(spec, i));
  cell.appendChild(canvas);
  grid.appendChild(cell);
});
paint(document.getElementById("preview"), firstPixels(1));
```
